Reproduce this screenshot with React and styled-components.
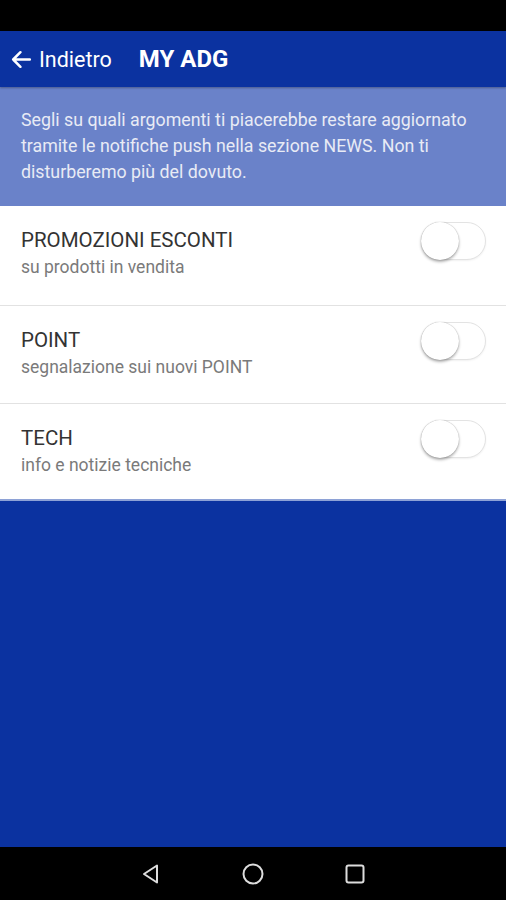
import React from "react";
import styled, { createGlobalStyle } from "styled-components";

const Global = createGlobalStyle`
  html, body { margin: 0; padding: 0; background: #0b32a0; }
  body { font-family: Roboto, "Noto Sans", sans-serif; }
  * { box-sizing: border-box; }
`;

const Screen = styled.div`
  width: 506px;
  height: 900px;
  display: flex;
  flex-direction: column;
  background: #0b32a0;
`;

const StatusBar = styled.div`
  height: 31px;
  background: #000;
  flex-shrink: 0;
`;

const AppBar = styled.div`
  height: 56px;
  background: #0b32a0;
  display: flex;
  align-items: center;
  padding-left: 9px;
  color: #fff;
  flex-shrink: 0;
  box-shadow: 0 1px 2px rgba(0,0,0,0.3);
  position: relative;
  z-index: 1;
`;

const Back = styled.div`
  display: flex;
  align-items: center;
  gap: 5px;
  font-size: 21.5px;
  margin-right: 27px;
`;

const Title = styled.div`
  font-size: 24px;
  font-weight: 700;
`;

const Info = styled.div`
  background: #6a82c9;
  color: #e8ebf5;
  font-size: 17.8px;
  line-height: 26px;
  padding: 20px 20px 20px 21px;
  height: 119px;
  flex-shrink: 0;
`;

const List = styled.div`
  background: #fff;
  display: flex;
  flex-direction: column;
  border-bottom: 2px solid #8ea2d6;
  flex-shrink: 0;
`;

const Row = styled.div`
  height: ${p => p.$h}px;
  display: flex;
  align-items: flex-start;
  justify-content: space-between;
  padding: 22px 20px 0 21px;
  border-top: ${p => (p.$first ? "none" : "1px solid #e2e2e2")};
`;

const Texts = styled.div`
  display: flex;
  flex-direction: column;
`;

const RowTitle = styled.div`
  font-size: 20.5px;
  color: #333;
  line-height: 25px;
`;

const RowSub = styled.div`
  font-size: 17.5px;
  color: #7a7a7a;
  line-height: 22px;
  margin-top: 3px;
`;

const Track = styled.div`
  width: 65px;
  height: 38px;
  border-radius: 19px;
  border: 1px solid #e3e3e3;
  background: #fff;
  display: flex;
  align-items: center;
  margin-top: -6px;
  box-shadow: 0 1px 2px rgba(0,0,0,0.06);
`;

const Thumb = styled.div`
  width: 38px;
  height: 38px;
  border-radius: 50%;
  background: #fff;
  margin-left: -1px;
  box-shadow: 0 2px 3px rgba(0,0,0,0.3), 0 0 1px rgba(0,0,0,0.35);
`;

const Spacer = styled.div`
  flex: 1;
`;

const NavBar = styled.div`
  height: 53px;
  background: #000;
  display: flex;
  align-items: center;
  justify-content: center;
  gap: 78px;
  flex-shrink: 0;
`;

const rows = [
  { t: "PROMOZIONI ESCONTI", s: "su prodotti in vendita", h: 99 },
  { t: "POINT", s: "segnalazione sui nuovi POINT", h: 98 },
  { t: "TECH", s: "info e notizie tecniche", h: 96 },
];

export default function App() {
  return (
    <>
      <Global />
      <Screen>
        <StatusBar />
        <AppBar>
          <Back>
            <svg width="25" height="25" viewBox="0 0 24 24" fill="none" stroke="#fff" strokeWidth="2.4" strokeLinecap="round" strokeLinejoin="round">
              <path d="M20 12H4M11 5l-7 7 7 7" />
            </svg>
            Indietro
          </Back>
          <Title>MY ADG</Title>
        </AppBar>
        <Info>
          Segli su quali argomenti ti piacerebbe restare aggiornato tramite le notifiche push nella sezione NEWS. Non ti disturberemo più del dovuto.
        </Info>
        <List>
          {rows.map((r, i) => (
            <Row key={r.t} $h={r.h} $first={i === 0}>
              <Texts>
                <RowTitle>{r.t}</RowTitle>
                <RowSub>{r.s}</RowSub>
              </Texts>
              <Track>
                <Thumb />
              </Track>
            </Row>
          ))}
        </List>
        <Spacer />
        <NavBar>
          <svg width="24" height="24" viewBox="0 0 24 24" fill="none" stroke="#ddd" strokeWidth="2" strokeLinejoin="round">
            <path d="M18 3.5v17L5 12z" />
          </svg>
          <svg width="24" height="24" viewBox="0 0 24 24" fill="none" stroke="#ddd" strokeWidth="2">
            <circle cx="12" cy="12" r="9.5" />
          </svg>
          <svg width="24" height="24" viewBox="0 0 24 24" fill="none" stroke="#ddd" strokeWidth="2">
            <rect x="3.5" y="3.5" width="17" height="17" rx="2" />
          </svg>
        </NavBar>
      </Screen>
    </>
  );
}
